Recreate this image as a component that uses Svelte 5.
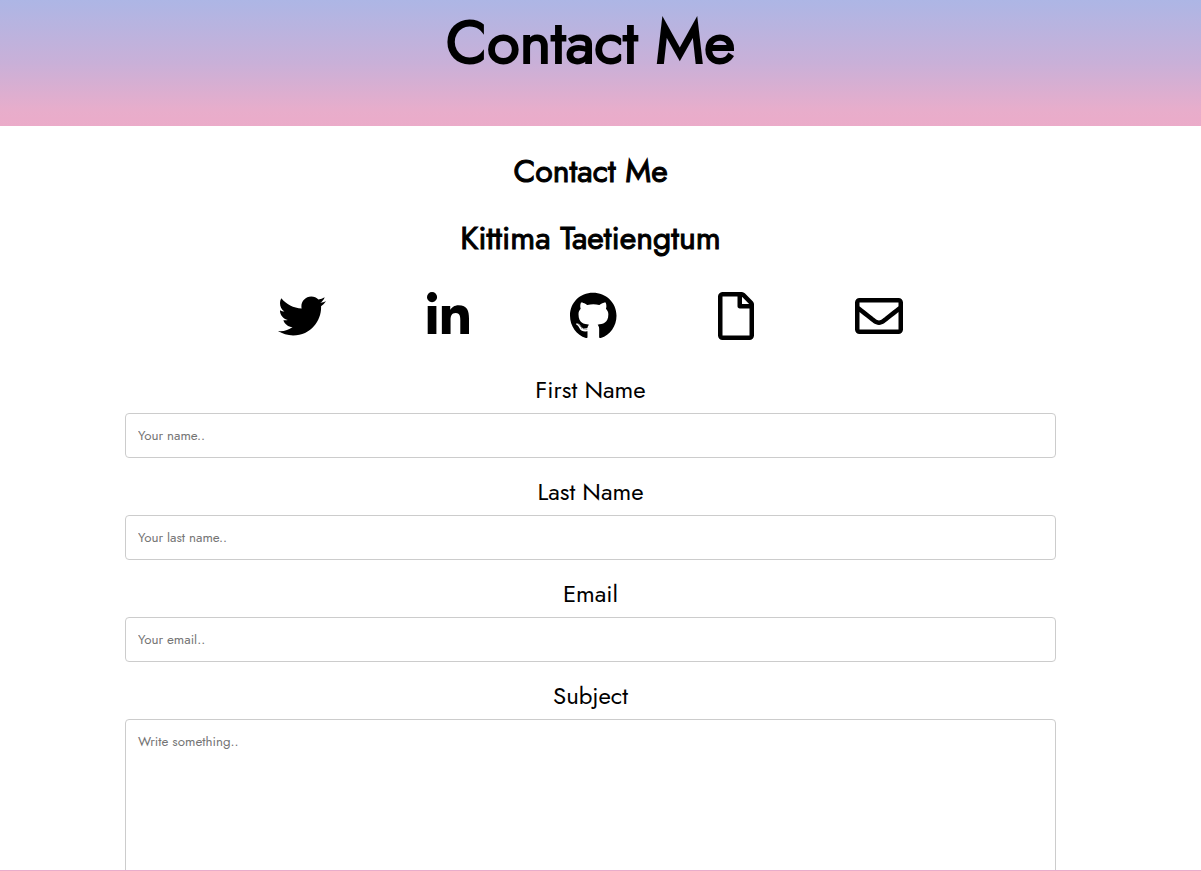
<script>
  const links = [
    {
      name: 'Twitter',
      width: 512,
      path: 'M459.37 151.716c.325 4.548.325 9.097.325 13.645 0 138.72-105.583 298.558-298.558 298.558-59.452 0-114.68-17.219-161.137-47.106 8.447.974 16.568 1.299 25.34 1.299 49.055 0 94.213-16.568 130.274-44.832-46.132-.975-84.792-31.188-98.112-72.772 6.498.974 12.995 1.624 19.818 1.624 9.421 0 18.843-1.3 27.614-3.573-48.081-9.747-84.143-51.98-84.143-102.985v-1.299c13.969 7.797 30.214 12.67 47.431 13.319-28.264-18.843-46.781-51.005-46.781-87.391 0-19.492 5.197-37.36 14.294-52.954 51.655 63.675 129.3 105.258 216.365 109.807-1.624-7.797-2.599-15.918-2.599-24.04 0-57.828 46.782-104.934 104.934-104.934 30.213 0 57.502 12.67 76.67 33.137 23.715-4.548 46.456-13.32 66.599-25.34-7.798 24.366-24.366 44.833-46.132 57.827 21.117-2.273 41.584-8.122 60.426-16.243-14.292 20.791-32.161 39.308-52.628 54.253z'
    },
    {
      name: 'LinkedIn',
      width: 448,
      path: 'M100.28 448H7.4V148.9h92.88zM53.79 108.1C24.09 108.1 0 83.5 0 53.8a53.79 53.79 0 0 1 107.58 0c0 29.7-24.1 54.3-53.79 54.3zM447.9 448h-92.68V302.4c0-34.7-.7-79.2-48.29-79.2-48.29 0-55.69 37.7-55.69 76.7V448h-92.78V148.9h89.08v40.8h1.3c12.4-23.5 42.69-48.3 87.88-48.3 94 0 111.28 61.9 111.28 142.3V448z'
    },
    {
      name: 'GitHub',
      width: 496,
      path: 'M165.9 397.4c0 2-2.3 3.6-5.2 3.6-3.3.3-5.6-1.3-5.6-3.6 0-2 2.3-3.6 5.2-3.6 3-.3 5.6 1.3 5.6 3.6zm-31.1-4.5c-.7 2 1.3 4.3 4.3 4.9 2.6 1 5.6 0 6.2-2s-1.3-4.3-4.3-5.2c-2.6-.7-5.5.3-6.2 2.3zm44.2-1.7c-2.9.7-4.9 2.6-4.6 4.9.3 2 2.9 3.3 5.9 2.6 2.9-.7 4.9-2.6 4.6-4.6-.3-1.9-3-3.2-5.9-2.9zM244.8 8C106.1 8 0 113.3 0 252c0 110.9 69.8 205.8 169.5 239.2 12.8 2.3 17.3-5.6 17.3-12.1 0-6.2-.3-40.4-.3-61.4 0 0-70 15-84.7-29.8 0 0-11.4-29.1-27.8-36.6 0 0-22.9-15.7 1.6-15.4 0 0 24.9 2 38.6 25.8 21.9 38.6 58.6 27.5 72.9 20.9 2.3-16 8.8-27.1 16-33.7-55.9-6.2-112.3-14.3-112.3-110.5 0-27.5 7.6-41.3 23.6-58.9-2.6-6.5-11.1-33.3 2.6-67.9 20.9-6.5 69 27 69 27 20-5.6 41.5-8.5 62.8-8.5s42.8 2.9 62.8 8.5c0 0 48.1-33.6 69-27 13.7 34.7 5.2 61.4 2.6 67.9 16 17.7 25.8 31.5 25.8 58.9 0 96.5-58.9 104.2-114.8 110.5 9.2 7.9 17 22.9 17 46.4 0 33.7-.3 75.4-.3 83.6 0 6.5 4.6 14.4 17.3 12.1C428.2 457.8 496 362.9 496 252 496 113.3 383.5 8 244.8 8zM97.2 352.9c-1.3 1-1 3.3.7 5.2 1.6 1.6 3.9 2.3 5.2 1 1.3-1 1-3.3-.7-5.2-1.6-1.6-3.9-2.3-5.2-1zm-10.8-8.1c-.7 1.3.3 2.9 2.3 3.9 1.6 1 3.6.7 4.3-.7.7-1.3-.3-2.9-2.3-3.9-2-.6-3.6-.3-4.3.7zm32.4 35.6c-1.6 1.3-1 4.3 1.3 6.2 2.3 2.3 5.2 2.6 6.5 1 1.3-1.3.7-4.3-1.3-6.2-2.2-2.3-5.2-2.6-6.5-1zm-11.4-14.7c-1.6 1-1.6 3.6 0 5.9 1.6 2.3 4.3 3.3 5.6 2.3 1.6-1.3 1.6-3.9 0-6.2-1.4-2.3-4-3.3-5.6-2z'
    },
    {
      name: 'Resume',
      width: 384,
      path: 'M369.9 97.9L286 14C277 5 264.8-.1 252.1-.1H48C21.5 0 0 21.5 0 48v416c0 26.5 21.5 48 48 48h288c26.5 0 48-21.5 48-48V131.9c0-12.7-5.1-25-14.1-34zM332.1 128H256V51.9l76.1 76.1zM48 464V48h160v104c0 13.3 10.7 24 24 24h104v288H48z'
    },
    {
      name: 'Email',
      width: 512,
      path: 'M464 64H48C21.49 64 0 85.49 0 112v288c0 26.51 21.49 48 48 48h416c26.51 0 48-21.49 48-48V112c0-26.51-21.49-48-48-48zm0 48v40.805c-22.422 18.259-58.168 46.651-134.587 106.49-16.841 13.247-50.201 45.072-73.413 44.701-23.208.375-56.579-31.459-73.413-44.701C106.18 199.465 70.425 171.067 48 152.805V112h416zM48 400V214.398c22.914 18.251 55.409 43.862 104.938 82.646 21.857 17.205 60.134 55.186 103.062 54.955 42.717.231 80.509-37.199 103.053-54.947 49.528-38.783 82.032-64.401 104.947-82.653V400H48z'
    }
  ];

  const fields = [
    { id: 'fname', label: 'First Name', type: 'text', placeholder: 'Your name..' },
    { id: 'lname', label: 'Last Name', type: 'text', placeholder: 'Your last name..' },
    { id: 'email', label: 'Email', type: 'email', placeholder: 'Your email..' }
  ];
</script>

<div class="page">
  <header>
    <h1>Contact Me</h1>
  </header>

  <main>
    <h2>Contact Me</h2>
    <h2>Kittima Taetiengtum</h2>

    <nav>
      {#each links as link}
        <a href="#{link.name.toLowerCase()}" aria-label={link.name}>
          <svg viewBox="0 0 {link.width} 512" aria-hidden="true"><path d={link.path} /></svg>
        </a>
      {/each}
    </nav>

    <form>
      {#each fields as field}
        <label for={field.id}>{field.label}</label>
        <input id={field.id} type={field.type} placeholder={field.placeholder} />
      {/each}
      <label for="subject">Subject</label>
      <textarea id="subject" placeholder="Write something.."></textarea>
    </form>
  </main>

  <footer></footer>
</div>

<style>
  :global(body) {
    margin: 0;
    background: #fff;
  }

  .page {
    display: flex;
    flex-direction: column;
    height: 100vh;
    overflow: hidden;
    color: #000;
    font-family: Jost, Lato, sans-serif;
    text-align: center;
  }

  header {
    flex: none;
    padding: 7px 20px 47px 0;
    background: linear-gradient(#adb6e5, #c9b0d8 50%, #e8adcb 88%, #ebabc9);
  }

  h1 {
    margin: 0;
    font-size: 60px;
    line-height: 72px;
    font-weight: 400;
    -webkit-text-stroke: 2px currentColor;
  }

  main {
    flex: 1;
    min-height: 0;
    overflow: hidden;
    padding: 21px 145px 0 125px;
  }

  h2 {
    margin: 0 0 19px;
    font-size: 32px;
    line-height: 48px;
    font-weight: 400;
    -webkit-text-stroke: 1px currentColor;
  }

  nav {
    display: flex;
    justify-content: center;
    gap: 101px;
    padding: 11px 0 32px;
  }

  nav a {
    display: block;
    color: inherit;
  }

  svg {
    display: block;
    height: 48px;
    fill: currentColor;
  }

  label {
    display: block;
    font-size: 24px;
    line-height: 35px;
  }

  input,
  textarea {
    display: block;
    box-sizing: border-box;
    width: 100%;
    margin: 6px 0 16px;
    padding: 12px;
    border: 1px solid #ccc;
    border-radius: 4px;
    background: #fff;
    font-family: inherit;
    line-height: 19px;
  }

  input {
    height: 45px;
  }

  textarea {
    height: 200px;
    resize: vertical;
  }

  input::placeholder,
  textarea::placeholder {
    color: #757575;
  }

  footer {
    flex: none;
    height: 1px;
    background: #e8adcb;
  }
</style>
